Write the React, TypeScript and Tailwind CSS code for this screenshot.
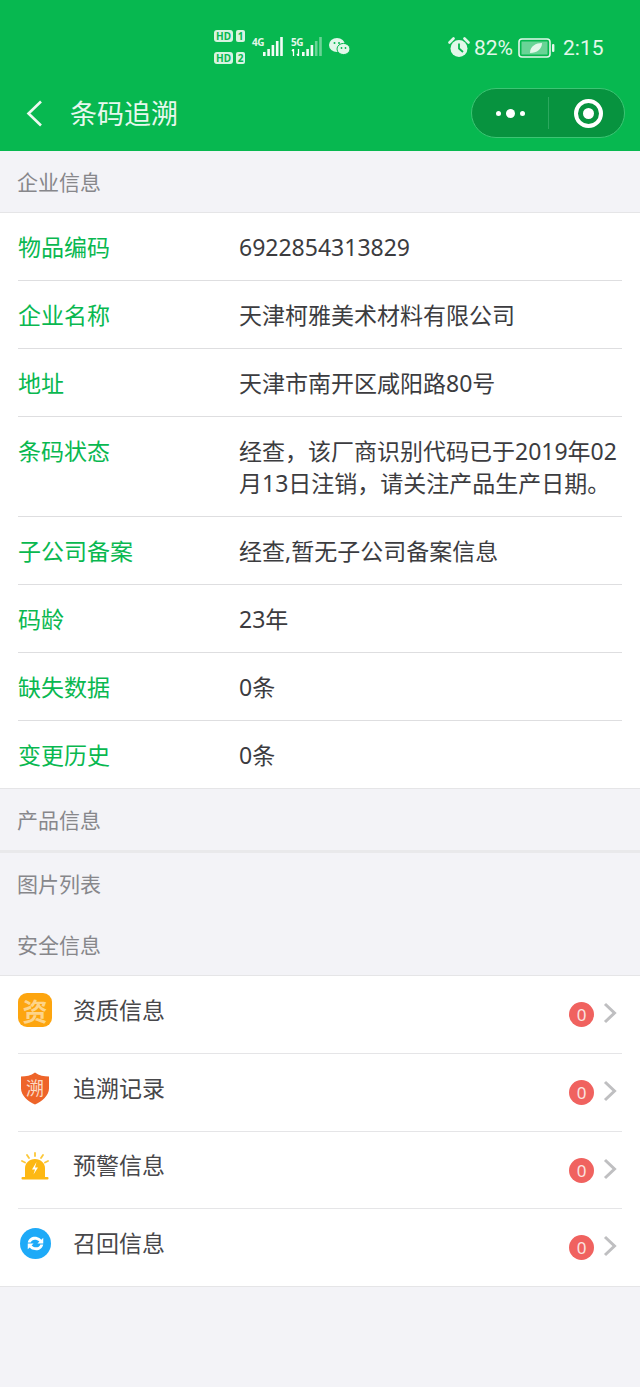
const font = { fontFamily: '"Noto Sans", "Noto Sans CJK SC", sans-serif' };
const cjk = { fontFamily: '"Noto Sans CJK SC", sans-serif' };

interface InfoRow {
  label: string;
  value: string;
}

const infoRows: InfoRow[] = [
  { label: "物品编码", value: "6922854313829" },
  { label: "企业名称", value: "天津柯雅美术材料有限公司" },
  { label: "地址", value: "天津市南开区咸阳路80号" },
  { label: "条码状态", value: "经查，该厂商识别代码已于2019年02月13日注销，请关注产品生产日期。" },
  { label: "子公司备案", value: "经查,暂无子公司备案信息" },
  { label: "码龄", value: "23年" },
  { label: "缺失数据", value: "0条" },
  { label: "变更历史", value: "0条" },
];

function Signal({ fade = 0 }: { fade?: number }) {
  const bars = [4, 7, 11, 15, 19];
  return (
    <svg width="21" height="19" viewBox="0 0 21 19">
      {bars.map((h, i) => (
        <rect key={i} x={i * 4.3} y={19 - h} width="2.6" height={h} fill="#fff" opacity={i >= bars.length - fade ? 0.4 : 0.95} />
      ))}
    </svg>
  );
}

function HdTag({ n }: { n: string }) {
  return (
    <div className="flex items-center gap-[3px]">
      <span className="flex h-[12px] w-[19px] items-center justify-center rounded-[3px] bg-[#d8f3e1] text-[10px] leading-none font-bold text-[#07b850]">HD</span>
      <span className="flex h-[12px] w-[9px] items-center justify-center rounded-[2px] bg-[#d8f3e1] text-[10px] leading-none font-bold text-[#07b850]">{n}</span>
    </div>
  );
}

function StatusBar() {
  return (
    <div className="flex h-[88px] items-start text-[#e3f7ea]">
      <div className="mt-[30px] ml-[214px] flex flex-col gap-[10px]">
        <HdTag n="1" />
        <HdTag n="2" />
      </div>
      <div className="mt-[37px] ml-[7px] flex items-start">
        <span className="w-[11px] text-[10px] leading-[10px] font-bold tracking-[-0.5px]">4G</span>
        <Signal />
      </div>
      <div className="relative mt-[37px] ml-[7px] flex items-start">
        <span className="w-[11px] text-[10px] leading-[10px] font-bold tracking-[-0.5px]">5G</span>
        <svg className="absolute top-[12px] left-0" width="10" height="7" viewBox="0 0 10 7">
          <path d="M2.500 0 V7 M1 2 L2.500 0 M7.500 0 V7 M6 5 L7.500 7" stroke="#fff" strokeWidth="1.300" fill="none" />
        </svg>
        <Signal fade={2} />
      </div>
      <svg className="mt-[38px] ml-[6px]" width="21" height="18" viewBox="0 0 21 18">
        <ellipse cx="8" cy="7" rx="8" ry="7" fill="#e3f7ea" />
        <ellipse cx="14.500" cy="11" rx="6.500" ry="5.600" fill="#e3f7ea" stroke="#07b850" strokeWidth="1" />
        <circle cx="5.500" cy="5" r="1" fill="#07b850" />
        <circle cx="10" cy="5" r="1" fill="#07b850" />
        <circle cx="12.500" cy="10" r="0.900" fill="#07b850" />
        <circle cx="16.500" cy="10" r="0.900" fill="#07b850" />
      </svg>
      <svg className="mt-[37px] ml-[98px]" width="22" height="21" viewBox="0 0 22 21">
        <circle cx="11" cy="11.500" r="8.500" fill="#e3f7ea" />
        <path d="M1.500 5.500 L5.500 1.500 M20.500 5.500 L16.500 1.500" stroke="#e3f7ea" strokeWidth="2.600" strokeLinecap="round" />
        <path d="M11 6.500 V11.500 L15 15" stroke="#07b850" strokeWidth="1.800" fill="none" />
      </svg>
      <span className="mt-[34px] ml-[4px] text-[21px] leading-[29px]" style={{ fontFamily: "Roboto, sans-serif" }}>82%</span>
      <svg className="mt-[38px] ml-[5px]" width="37" height="20" viewBox="0 0 37 20">
        <rect x="1" y="1" width="31" height="18" rx="3" fill="none" stroke="#e3f7ea" strokeWidth="1.600" />
        <rect x="3.500" y="3.500" width="26" height="13" fill="#e3f7ea" opacity="0.450" />
        <path d="M12 15 C12 8 18 5 24 5 C24 11 19 15 12 15 Z" fill="#e3f7ea" />
        <rect x="34" y="6" width="2.400" height="8" rx="1" fill="#e3f7ea" />
      </svg>
      <span className="mt-[34px] ml-[8px] text-[21px] leading-[29px]" style={{ fontFamily: "Roboto, sans-serif" }}>2:15</span>
    </div>
  );
}

function NavBar() {
  return (
    <div className="flex h-[63px] items-start">
      <svg className="mt-[12px] ml-[26px]" width="17" height="27" viewBox="0 0 17 27">
        <path d="M15 1.500 L2.500 13.500 L15 25.500" fill="none" stroke="#ecf9f0" strokeWidth="2.600" />
      </svg>
      <span className="mt-[5px] ml-[27px] text-[27px] leading-[40px] text-[#e8f8ee]" style={cjk}>条码追溯</span>
      <div className="mt-0 ml-[293px] flex h-[50px] w-[154px] items-center rounded-full border border-[#3cc574] bg-[#07933f]">
        <div className="flex w-[76px] items-center justify-center gap-[5px]">
          <span className="h-[5px] w-[5px] rounded-full bg-white" />
          <span className="h-[9px] w-[9px] rounded-full bg-white" />
          <span className="h-[5px] w-[5px] rounded-full bg-white" />
        </div>
        <div className="h-[32px] w-px bg-[#2ba85e]" />
        <div className="flex flex-1 items-center justify-center pl-[4px]">
          <div className="flex h-[29px] w-[29px] items-center justify-center rounded-full border-[4px] border-white">
            <span className="h-[11px] w-[11px] rounded-full bg-white" />
          </div>
        </div>
      </div>
    </div>
  );
}

function QualIcon() {
  return (
    <div className="flex h-[34px] w-[34px] items-center justify-center rounded-[9px] bg-[#fda50f] text-[25px] leading-none font-bold text-[#fdd48a]" style={cjk}>资</div>
  );
}

function ShieldIcon() {
  return (
    <div className="relative h-[33px] w-[28px]">
      <svg className="absolute inset-0" width="28" height="33" viewBox="0 0 28 32">
        <path d="M14 0 C18 3 23 4 28 4 V16 C28 23 21 29 14 32 C7 29 0 23 0 16 V4 C5 4 10 3 14 0 Z" fill="#ee6429" />
      </svg>
      <span className="absolute inset-0 flex items-center justify-center pb-[3px] text-[18px] leading-none text-[#fbd9c5]" style={cjk}>溯</span>
    </div>
  );
}

function AlarmIcon() {
  return (
    <svg width="28" height="28" viewBox="0 0 28 28">
      <path d="M14 1 V4 M6 3 L8 6 M22 3 L20 6 M1 9 L4 10.500 M27 9 L24 10.500" stroke="#fcc839" strokeWidth="1.800" strokeLinecap="round" />
      <path d="M4 25 V16 C4 11 8.500 7 14 7 C19.500 7 24 11 24 16 V25 Z" fill="#fdb813" />
      <rect x="0.500" y="25" width="27" height="2.400" rx="1" fill="#fdb813" />
      <path d="M15.500 10 L11 17.500 H14 L12.500 22.500 L17 15.500 H14 Z" fill="#fff" />
    </svg>
  );
}

function RecallIcon() {
  return (
    <svg width="31" height="31" viewBox="0 0 32 32">
      <circle cx="16" cy="16" r="16" fill="#1eaaf8" />
      <path d="M8 15 C9 10 14 8 18 9.500 C20 10 21 11 22 12 L24 10 V16 H18 L20 14 C17 11 12 11.500 11 15 Z" fill="#fff" />
      <path d="M24 17 C23 22 18 24 14 22.500 C12 22 11 21 10 20 L8 22 V16 H14 L12 18 C15 21 20 20.500 21 17 Z" fill="#fff" />
    </svg>
  );
}

const listRows = [
  { label: "资质信息", icon: <QualIcon />, h: "h-[78px]" },
  { label: "追溯记录", icon: <ShieldIcon />, h: "h-[78px]" },
  { label: "预警信息", icon: <AlarmIcon />, h: "h-[77px]" },
  { label: "召回信息", icon: <RecallIcon />, h: "h-[77px]" },
];

function SectionTitle({ text }: { text: string }) {
  return <div className="pb-[2px] pl-[17px] text-[21px] leading-[30px] text-[#87878b]" style={cjk}>{text}</div>;
}

export default function App() {
  return (
    <div className="flex min-h-[1387px] w-[640px] flex-col overflow-hidden bg-[#f3f3f7]" style={font}>
      <div className="bg-[#07b850]">
        <StatusBar />
        <NavBar />
      </div>

      <div className="flex h-[61px] items-center">
        <SectionTitle text="企业信息" />
      </div>

      <div className="border-y border-[#e5e5e7] bg-white pl-[18px]">
        {infoRows.map((row, i) => (
          <div key={row.label} className={`mr-[18px] flex py-[17px] ${i < infoRows.length - 1 ? "border-b border-[#dedee0]" : ""}`}>
            <div className="w-[221px] shrink-0 text-[23px] leading-[32px] text-[#09b850]" style={cjk}>{row.label}</div>
            <div className="pt-px text-[23px] leading-[32px] break-all text-[#3c3c3f]">{row.value}</div>
          </div>
        ))}
      </div>

      <div className="flex h-[64px] items-center border-b-[3px] border-[#e9e9eb]">
        <SectionTitle text="产品信息" />
      </div>
      <div className="flex h-[62px] items-center">
        <SectionTitle text="图片列表" />
      </div>
      <div className="flex h-[60px] items-center">
        <SectionTitle text="安全信息" />
      </div>

      <div className="border-y border-[#e5e5e7] bg-white pl-[18px]">
        {listRows.map((row, i) => (
          <div key={row.label} className={`mr-[18px] flex items-center ${row.h} ${i < listRows.length - 1 ? "border-b border-[#e5e5e7]" : ""}`}>
            <div className="mb-[9px] flex w-[34px] justify-center">{row.icon}</div>
            <span className="mb-[12px] ml-[21px] flex-1 text-[23px] leading-[32px] text-[#47474a]" style={cjk}>{row.label}</span>
            <span className="mr-[9px] flex h-[25px] w-[25px] items-center justify-center rounded-full bg-[#f0625f] text-[17px] leading-none text-[#fbe4e0]">0</span>
            <svg className="mr-[5px] mb-[3px]" width="14" height="22" viewBox="0 0 14 22">
              <path d="M2 2 L11.500 11 L2 20" fill="none" stroke="#bfbfc1" strokeWidth="3" />
            </svg>
          </div>
        ))}
      </div>
    </div>
  );
}
